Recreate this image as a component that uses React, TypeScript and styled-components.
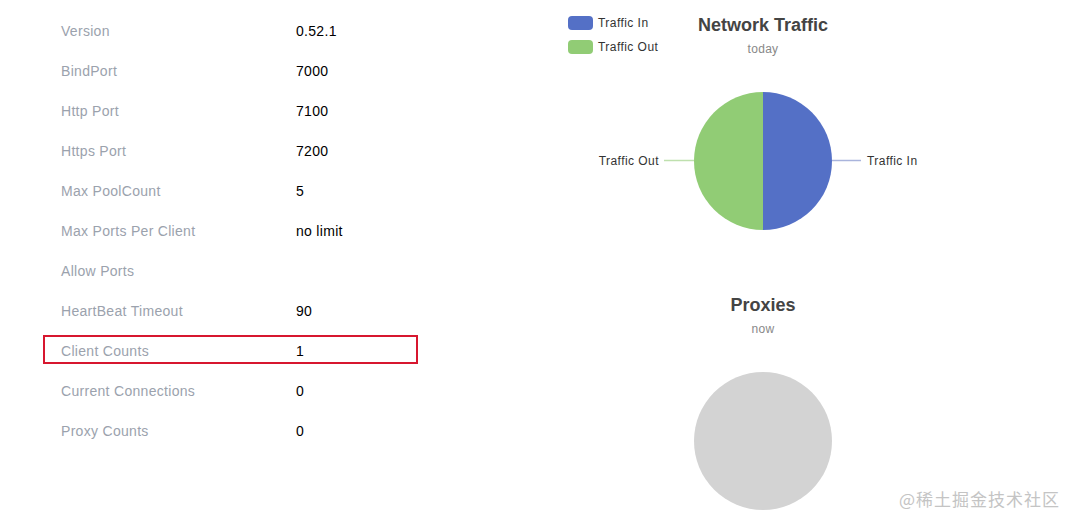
import React from "react";
import styled, { createGlobalStyle } from "styled-components";

interface IInfo {
  label: string;
  value: string;
  highlighted?: boolean;
}

const GlobalStyle = createGlobalStyle`
  html, body {
    margin: 0;
    padding: 0;
    background: #fff;
  }
  body {
    font-family: "Liberation Sans", Arial, sans-serif;
  }
`;

const Page = styled.div`
  position: relative;
  width: 1067px;
  height: 517px;
  overflow: hidden;
  display: grid;
  grid-template-columns: 477px 400px;
  column-gap: 43px;
  padding-left: 43px;
  box-sizing: border-box;
`;

const InfoList = styled.div`
  display: flex;
  flex-direction: column;
  padding-top: 11px;
`;

const Row = styled.div`
  height: 40px;
  display: flex;
  align-items: flex-start;
`;

const Item = styled.div<{ $highlighted?: boolean }>`
  width: 375px;
  height: 29px;
  margin-top: 4px;
  box-sizing: border-box;
  display: flex;
  align-items: center;
  padding-left: 16px;
  padding-top: 2px;
  font-size: 14px;
  letter-spacing: 0.3px;
  border: 2px solid ${({ $highlighted }) => ($highlighted ? "#d7172f" : "transparent")};
`;

const Label = styled.span`
  width: 235px;
  color: #9ba2ad;
`;

const Value = styled.span`
  color: #000;
`;

const Charts = styled.div`
  display: flex;
  flex-direction: column;
`;

const Chart = styled.div`
  position: relative;
  width: 400px;
  height: 280px;
  display: flex;
  flex-direction: column;
  align-items: center;
`;

const Title = styled.div`
  margin-top: 15px;
  font-size: 18px;
  font-weight: bold;
  color: #444;
  line-height: 21px;
`;

const SubTitle = styled.div`
  margin-top: 6px;
  font-size: 12px;
  color: #888;
  line-height: 14px;
  letter-spacing: 0.3px;
`;

const Legend = styled.div`
  position: absolute;
  left: 5px;
  top: 16px;
  display: flex;
  flex-direction: column;
  gap: 10px;
`;

const LegendItem = styled.div`
  display: flex;
  align-items: center;
  gap: 5px;
  font-size: 12px;
  letter-spacing: 0.45px;
  color: #333;
  height: 14px;
`;

const Swatch = styled.span<{ $color: string }>`
  width: 25px;
  height: 14px;
  border-radius: 4px;
  background: ${({ $color }) => $color};
`;

const Pie = styled.svg`
  display: block;
  margin-top: 25px;
`;

const Watermark = styled.div`
  position: absolute;
  right: 7px;
  bottom: 6px;
  font-family: "Noto Sans CJK SC", "Liberation Serif", serif;
  font-size: 17px;
  color: #c4c4c4;
  letter-spacing: 1px;
`;

const info: IInfo[] = [
  { label: "Version", value: "0.52.1" },
  { label: "BindPort", value: "7000" },
  { label: "Http Port", value: "7100" },
  { label: "Https Port", value: "7200" },
  { label: "Max PoolCount", value: "5" },
  { label: "Max Ports Per Client", value: "no limit" },
  { label: "Allow Ports", value: "" },
  { label: "HeartBeat Timeout", value: "90" },
  { label: "Client Counts", value: "1", highlighted: true },
  { label: "Current Connections", value: "0" },
  { label: "Proxy Counts", value: "0" },
];

// pie drawn in a 400 x 160 box, centre at (200, 80)
const TrafficPie = () => (
  <Pie width="400" height="160" viewBox="0 0 400 160">
    <path d="M200 11 A69 69 0 0 1 200 149 Z" fill="#5470c6" />
    <path d="M200 149 A69 69 0 0 1 200 11 Z" fill="#91cc75" />
    <line x1="269" y1="79.5" x2="298" y2="79.5" stroke="#a9b4dc" strokeWidth="1.5" />
    <line x1="101" y1="79.5" x2="131" y2="79.5" stroke="#bfe0ae" strokeWidth="1.5" />
    <text x="304" y="84" fontSize="12" fill="#333" letterSpacing="0.45" fontFamily="Liberation Sans, Arial, sans-serif">
      Traffic In
    </text>
    <text x="96" y="84" fontSize="12" fill="#333" letterSpacing="0.45" textAnchor="end" fontFamily="Liberation Sans, Arial, sans-serif">
      Traffic Out
    </text>
  </Pie>
);

const ProxyPie = () => (
  <Pie width="400" height="160" viewBox="0 0 400 160">
    <circle cx="200" cy="80" r="69" fill="#d3d3d3" />
  </Pie>
);

const App = () => {
  return (
    <>
      <GlobalStyle />
      <Page>
        <InfoList>
          {info.map((row) => (
            <Row key={row.label}>
              <Item $highlighted={row.highlighted}>
                <Label>{row.label}</Label>
                <Value>{row.value}</Value>
              </Item>
            </Row>
          ))}
        </InfoList>
        <Charts>
          <Chart>
            <Legend>
              <LegendItem>
                <Swatch $color="#5470c6" />
                Traffic In
              </LegendItem>
              <LegendItem>
                <Swatch $color="#91cc75" />
                Traffic Out
              </LegendItem>
            </Legend>
            <Title>Network Traffic</Title>
            <SubTitle>today</SubTitle>
            <TrafficPie />
          </Chart>
          <Chart>
            <Title>Proxies</Title>
            <SubTitle>now</SubTitle>
            <ProxyPie />
          </Chart>
        </Charts>
        <Watermark>@稀土掘金技术社区</Watermark>
      </Page>
    </>
  );
};

export default App;
